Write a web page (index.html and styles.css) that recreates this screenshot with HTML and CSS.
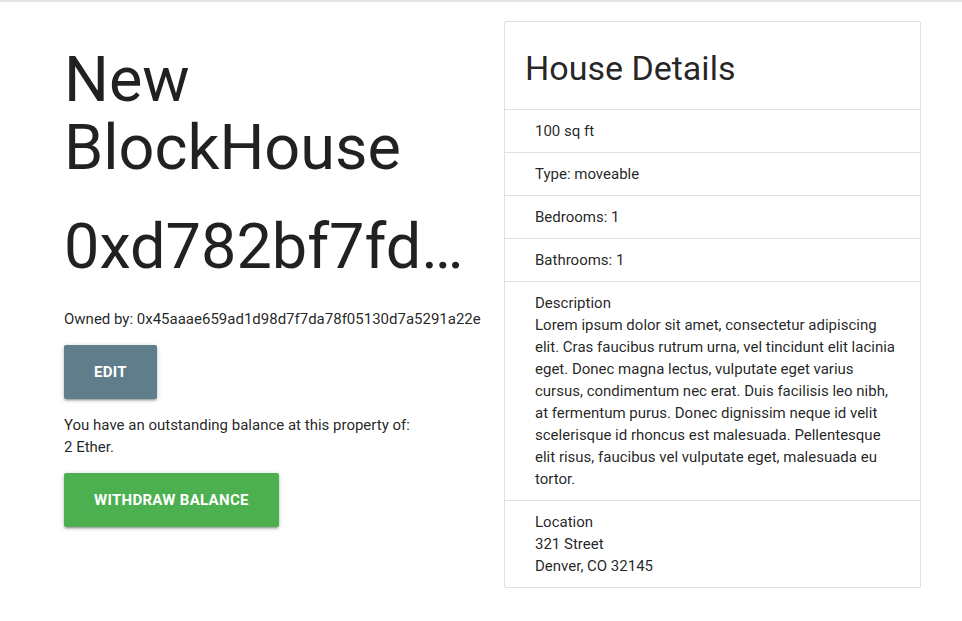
FILE: index.html
```html
<!DOCTYPE html>
<html>
<head>
<meta charset="utf-8">
<link rel="stylesheet" href="styles.css">
</head>
<body>
<div class="topline"></div>
<main class="page">
  <section class="left">
    <h1 class="title">New BlockHouse</h1>
    <h1 class="title addr">0xd782bf7fd3a0c51e8f2b94d6a7e1c03f5b28e9d4</h1>
    <p class="text">Owned by: 0x45aaae659ad1d98d7f7da78f05130d7a5291a22e</p>
    <button class="btn btn-edit">Edit</button>
    <p class="text">You have an outstanding balance at this property of:<br>2 Ether.</p>
    <button class="btn btn-withdraw">Withdraw Balance</button>
  </section>
  <section class="right">
    <ul class="collection">
      <li class="collection-header"><h4>House Details</h4></li>
      <li class="collection-item">100 sq ft</li>
      <li class="collection-item">Type: moveable</li>
      <li class="collection-item">Bedrooms: 1</li>
      <li class="collection-item">Bathrooms: 1</li>
      <li class="collection-item">Description<br>Lorem ipsum dolor sit amet, consectetur adipiscing elit. Cras faucibus rutrum urna, vel tincidunt elit lacinia eget. Donec magna lectus, vulputate eget varius cursus, condimentum nec erat. Duis facilisis leo nibh, at fermentum purus. Donec dignissim neque id velit scelerisque id rhoncus est malesuada. Pellentesque elit risus, faucibus vel vulputate eget, malesuada eu tortor.</li>
      <li class="collection-item">Location<br>321 Street<br>Denver, CO 32145</li>
    </ul>
  </section>
</main>
</body>
</html>
```

FILE: styles.css
```css
html, body {
  margin: 0;
  padding: 0;
  background: #ffffff;
}

body {
  font-family: Roboto, "Liberation Sans", sans-serif;
  font-size: 15px;
  line-height: 22px;
  color: rgba(0, 0, 0, 0.87);
}

.topline {
  height: 2px;
  background: #e6e6e6;
}

.page {
  display: flex;
  align-items: flex-start;
  gap: 20px;
  padding: 12px 0 0 64px;
}

.left {
  width: 420px;
  flex: none;
}

.title {
  font-size: 63px;
  line-height: 68px;
  font-weight: 400;
  margin: 32px 0 0 0;
}

.addr {
  margin-top: 31px;
  margin-bottom: 27px;
  white-space: nowrap;
  overflow: hidden;
  text-overflow: ellipsis;
}

.text {
  margin: 0 0 15px 0;
}

.btn {
  display: block;
  border: none;
  border-radius: 2px;
  height: 54px;
  padding: 0 30px;
  margin: 0 0 15px 0;
  font-family: Roboto, "Liberation Sans", sans-serif;
  font-size: 15px;
  font-weight: 700;
  letter-spacing: 0.3px;
  text-transform: uppercase;
  color: #ffffff;
  box-shadow: 0 2px 2px 0 rgba(0,0,0,0.14), 0 3px 1px -2px rgba(0,0,0,0.12), 0 1px 5px 0 rgba(0,0,0,0.2);
}

.btn-edit {
  background: #607d8b;
}

.btn-withdraw {
  background: #4caf50;
}

.right {
  width: 417px;
  flex: none;
  padding-top: 7px;
}

.collection {
  list-style: none;
  margin: 0;
  padding: 0;
  border: 1px solid #e0e0e0;
  border-radius: 2px;
}

.collection-header {
  height: 83px;
  display: flex;
  align-items: center;
  padding: 4px 20px 0 20px;
  border-bottom: 1px solid #e0e0e0;
}

.collection-header h4 {
  margin: 0;
  font-size: 34px;
  line-height: 40px;
  font-weight: 400;
}

.collection-item {
  padding: 10px 20px 10px 30px;
  border-bottom: 1px solid #e0e0e0;
}

.collection-item:last-child {
  border-bottom: none;
}
```
